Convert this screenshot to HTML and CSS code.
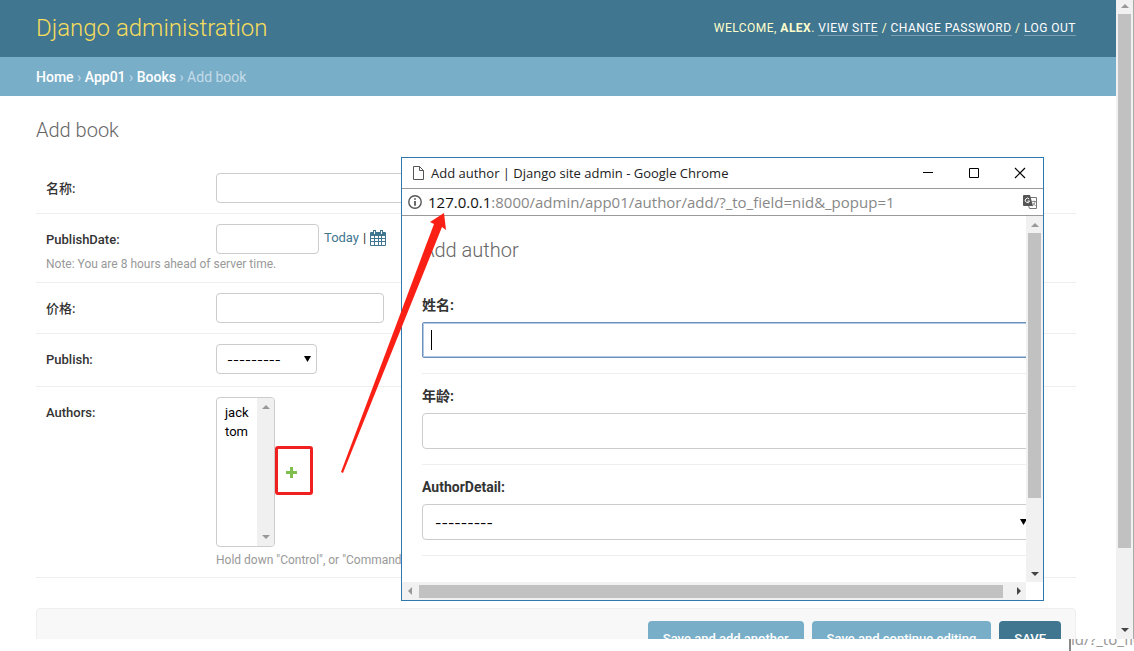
FILE: index.html
```html
<!DOCTYPE html>
<html lang="en">
<head>
<meta charset="utf-8">
<title>Add book | Django site admin</title>
<link rel="stylesheet" href="styles.css">
</head>
<body>
<div class="desktop">
  <div class="browser">
    <div class="page">
      <header class="header">
        <div class="branding">Django administration</div>
        <div class="user-tools">Welcome, <strong>Alex</strong>. <a href="#">View site</a> / <a href="#">Change password</a> / <a href="#">Log out</a></div>
      </header>
      <nav class="breadcrumbs"><a href="#">Home</a> › <a href="#">App01</a> › <a href="#">Books</a> › Add book</nav>
      <main class="content">
        <h1 class="page-title">Add book</h1>
        <form>
          <div class="form-row">
            <label class="row-label" for="name">名称:</label>
            <input class="field field-wide" id="name" type="text">
          </div>
          <div class="form-row form-row-noted">
            <div class="row-line">
              <label class="row-label" for="date">PublishDate:</label>
              <input class="field field-date" id="date" type="text">
              <span class="shortcuts"><a href="#">Today</a><span>|</span><a href="#" aria-label="Choose date"><svg class="calendar" viewBox="0 0 16 16" width="16" height="16"><path fill="#417690" fill-rule="evenodd" d="M1 2h2V0h3v2h4V0h3v2h2q1 0 1 1v12q0 1-1 1H1q-1 0-1-1V3q0-1 1-1zM1 6v2h3V6zM5 6v2h3V6zM9 6v2h2V6zM12 6v2h3V6zM1 9v2h3V9zM5 9v2h3V9zM9 9v2h2V9zM12 9v2h3V9zM1 12v3h3v-3zM5 12v3h3v-3zM9 12v3h2v-3zM12 12v3h3v-3zM4 1v3h1V1zM11 1v3h1V1z"/></svg></a></span>
            </div>
            <p class="note">Note: You are 8 hours ahead of server time.</p>
          </div>
          <div class="form-row">
            <label class="row-label" for="price">价格:</label>
            <input class="field field-price" id="price" type="text">
          </div>
          <div class="form-row form-row-select">
            <label class="row-label" for="publish">Publish:</label>
            <span class="select-wrap"><select class="field field-select" id="publish"><option>---------</option></select><svg class="caret" viewBox="0 0 7 6" width="7" height="6"><path d="M0 0h7L3.500 6z"/></svg></span>
          </div>
          <div class="form-row form-row-top">
            <label class="row-label" for="authors">Authors:</label>
            <div class="authors">
              <div class="authors-line">
                <div class="listbox">
                  <select class="list" id="authors" multiple><option>jack</option><option>tom</option></select>
                  <div class="list-scroll"><i class="tri tri-up"></i><i class="tri tri-down"></i></div>
                </div>
                <a class="add-link" href="#" aria-label="Add another author"><svg viewBox="0 0 11 11" width="11" height="11"><path fill="#7fbf4d" d="M4 0h3v4h4v3H7v4H4V7H0V4h4z"/></svg></a>
              </div>
              <p class="help">Hold down "Control", or "Command" on a Mac, to select more than one.</p>
            </div>
          </div>
          <div class="submit-row">
            <button class="btn" type="button">Save and add another</button>
            <button class="btn" type="button">Save and continue editing</button>
            <button class="btn btn-main" type="button">SAVE</button>
          </div>
        </form>
      </main>
    </div>
    <div class="scroll-y scroll-page"><i class="tri tri-up"></i><div class="thumb"></div><i class="tri tri-down tri-dark"></i></div>
  </div>
  <div class="under"><div class="under-text">id/?_to_field</div></div>

  <section class="popup" aria-label="Add author">
    <div class="titlebar">
      <svg class="doc" viewBox="0 0 11 14" width="11" height="14" fill="none" stroke="#555"><path d="M.5.5h6l4 4v9H.5zM6.500.5v4h4"/></svg>
      <span class="title-text">Add author | Django site admin - Google Chrome</span>
      <button class="win-btn" aria-label="Minimize"><svg viewBox="0 0 12 12" width="12" height="12"><path d="M1 5.500h10" stroke="#000"/></svg></button>
      <button class="win-btn" aria-label="Maximize"><svg viewBox="0 0 12 12" width="12" height="12"><path d="M1.500 1.500h9v9h-9z" stroke="#000" fill="none"/></svg></button>
      <button class="win-btn" aria-label="Close"><svg viewBox="0 0 12 12" width="12" height="12"><path d="M1 1l10 10M11 1L1 11" stroke="#000" stroke-width="1.200"/></svg></button>
    </div>
    <div class="urlbar">
      <svg viewBox="0 0 14 14" width="14" height="14"><circle cx="7" cy="7" r="6.200" fill="none" stroke="#555" stroke-width="1.400"/><path d="M6.200 3.200h1.600v1.600H6.200zM6.200 6h1.600v4.800H6.200z" fill="#444"/></svg>
      <span class="url"><b>127.0.0.1</b>:8000/admin/app01/author/add/?_to_field=nid&amp;_popup=1</span>
      <svg viewBox="0 0 14 14" width="14" height="14"><path d="M7 2.500h6.500v11H6.500l-1-3" fill="#fff" stroke="#777"/><path d="M1 0h6l3 11H1q-1 0-1-1V1q0-1 1-1z" fill="#555"/><path d="M6.200 4A2.200 2.200 0 1 0 6.600 6H4.500" fill="none" stroke="#fff"/><path d="M9 6.500h4M11 5.500v1M12.300 6.500q-.5 3-3 4.500M9.700 8l3 3" fill="none" stroke="#777" stroke-width=".8"/></svg>
    </div>
    <div class="popup-main">
      <div class="popup-view">
        <div class="popup-content">
          <h2 class="page-title">Add author</h2>
          <div class="popup-row"><label for="aname">姓名:</label><div class="popup-field popup-focus"><i class="cursor"></i><input id="aname" type="text"></div></div>
          <div class="popup-row"><label for="age">年龄:</label><div class="popup-field"><input id="age" type="text"></div></div>
          <div class="popup-row"><label for="detail">AuthorDetail:</label><div class="popup-field"><select id="detail"><option>---------</option></select><svg class="caret" viewBox="0 0 7 6" width="7" height="6"><path d="M0 0h7L3.500 6z"/></svg></div></div>
        </div>
      </div>
      <div class="scroll-y scroll-popup"><i class="tri tri-up"></i><div class="thumb"></div><i class="tri tri-down tri-dark"></i></div>
    </div>
    <div class="scroll-x"><i class="tri tri-left"></i><div class="thumb"></div><i class="tri tri-right"></i></div>
  </section>

  <div class="highlight"></div>
  <svg class="arrow" viewBox="0 0 106 262" width="106" height="262"><path fill="#fb2015" d="M0 259L93 11l-4-2L103 0l2 17-4-3L2 260z"/></svg>
</div>
</body>
</html>
```
FILE: styles.css
```css
* { box-sizing: border-box; }
body {
  margin: 0;
  background: #fff;
  color: #333;
  font: 13px/16px Roboto, "Noto Sans CJK SC", sans-serif;
}
h1, h2, p { margin: 0; }
a { color: #417690; text-decoration: none; }
input, select, button { font: inherit; color: inherit; border: 0; margin: 0; background: none; outline: 0; }
select { appearance: none; }

.desktop { position: relative; height: 100vh; display: flex; flex-direction: column; overflow: hidden; }
.browser { flex: 1; min-height: 0; display: flex; overflow: hidden; }
.page { flex: 1; min-width: 0; overflow: hidden; }

.header {
  display: flex; justify-content: space-between; align-items: center;
  height: 57px; padding: 0 40px 2px 36px;
  background: #417690; color: #ffc;
}
.branding { font-size: 24px; line-height: 28px; font-weight: 300; color: #f5dd5d; }
.user-tools { font-size: 12px; letter-spacing: 0.04em; text-transform: uppercase; }
.user-tools a { color: #fff; border-bottom: 1px solid #7a9fb1; }
.breadcrumbs {
  padding: 11px 36px 9px; line-height: 19px; font-size: 14px;
  background: #79aec8; color: #c4dce8;
}
.breadcrumbs a { color: #fff; font-weight: 500; }

.content { padding: 22px 40px 0 36px; }
.page-title { font-size: 20px; line-height: 24px; font-weight: 300; color: #666; }
form { padding-top: 21px; }
.form-row { display: flex; align-items: center; padding: 10px; border-bottom: 1px solid #eee; }
.form-row-noted { display: block; padding-bottom: 9px; }
.form-row-select { padding-bottom: 12px; }
.form-row-top { align-items: flex-start; }
.form-row .row-label { padding-top: 2px; }
.form-row-top .row-label { padding-top: 8px; }
.row-line { display: flex; align-items: center; }
.row-label { width: 170px; flex: none; font-weight: 500; }
.field { height: 30px; border: 1px solid #ccc; border-radius: 4px; background: #fff; padding: 4px 10px; }
.field-wide { width: 360px; }
.field-date { width: 103px; }
.field-price { width: 168px; }
.field-select { width: 101px; padding-top: 6px; font-family: Inter, sans-serif; color: #000; }
.shortcuts { display: flex; align-items: center; gap: 4px; padding: 0 0 2px 5px; }
.calendar { display: block; }
.note, .help { font-size: 12px; line-height: 18px; color: #999; }
.note { padding-top: 1px; }
.select-wrap { display: flex; position: relative; }
.caret { position: absolute; right: 6px; top: 50%; margin-top: -3px; pointer-events: none; }
.authors-line { display: flex; align-items: center; gap: 11px; }
.add-link { padding-top: 3px; }
.listbox { display: flex; width: 59px; height: 150px; border: 1px solid #ccc; border-radius: 4px; overflow: hidden; }
.list { flex: 1; min-width: 0; padding: 7px 0 0 8px; color: #000; overflow: hidden; scrollbar-width: none; }
.list option { padding: 0; line-height: 19px; min-height: 19px; }
.list-scroll { width: 17px; display: flex; flex-direction: column; align-items: center; justify-content: space-between; padding: 7px 0; background: #f0f0f0; }
.help { padding-top: 6px; line-height: 14px; }
.submit-row {
  display: flex; justify-content: flex-end; gap: 8px;
  margin-top: 30px; padding: 12px 14px;
  background: #f8f8f8; border: 1px solid #eee; border-radius: 4px;
}
.btn { height: 35px; padding: 0 15px; border-radius: 4px; background: #79aec8; color: #fff; font-weight: 500; }
.btn-main { background: #417690; }

.tri { flex: none; width: 0; height: 0; border: 4px solid transparent; }
.tri-up { border-top: 0; border-bottom-color: #999; }
.tri-down { border-bottom: 0; border-top-color: #999; }
.tri-left { border-left: 0; border-right-color: #999; }
.tri-right { border-right: 0; border-left-color: #444; }
.tri-dark { border-top-color: #444; }
.scroll-y { flex: none; display: flex; flex-direction: column; align-items: center; background: #f1f1f1; }
.scroll-y .tri-down { margin-top: auto; }
.scroll-y .thumb { width: 13px; background: #c1c1c1; }
.scroll-page { width: 18px; padding: 4px 0 7px; border-right: 1px solid #aaa; }
.scroll-page .thumb { height: 85%; margin-top: 6px; }
.scroll-popup { width: 17px; padding: 7px 0 6px; }
.scroll-popup .thumb { height: 75%; margin-top: 6px; }

.under { flex: none; height: 12px; display: flex; justify-content: flex-end; background: #fff; overflow: hidden; }
.under-text {
  width: 65px; height: 12px; border-left: 2px solid #888; overflow: hidden;
  display: flex; align-items: flex-end; white-space: nowrap;
  font: 15px/24px "Noto Sans", sans-serif; color: #999;
}

.popup {
  position: absolute; left: 401px; top: 157px; width: 643px; height: 444px;
  display: flex; flex-direction: column;
  background: #fff; border: 1px solid #2e78ad;
}
.titlebar { display: flex; align-items: center; height: 31px; padding-left: 11px; border-bottom: 1px solid #999; font: 13px/20px "Open Sans", sans-serif; color: #222; }
.title-text { flex: 1; padding-left: 7px; }
.win-btn { display: flex; align-items: center; justify-content: center; width: 46px; height: 28px; padding: 0; }
.urlbar { display: flex; align-items: center; gap: 6px; height: 27px; padding: 0 6px; border-bottom: 1px solid #999; font: 15px/20px "Open Sans", sans-serif; color: #888; }
.url { flex: 1; }
.url b { font-weight: 400; color: #111; }
.popup-main { flex: 1; min-height: 0; display: flex; }
.popup-view { flex: 1; min-width: 0; overflow: hidden; }
.popup-content { width: 632px; padding: 22px 0 0 20px; }
.popup-content .page-title { padding-bottom: 21px; box-sizing: content-box; }
.popup-row { padding: 14px 0 15px; border-bottom: 1px solid #eee; }
.popup-row label { display: block; height: 25px; line-height: 16px; font-size: 14px; font-weight: 700; }
.popup-field { position: relative; display: flex; align-items: center; height: 36px; border: 1px solid #ccc; border-radius: 4px; }
.popup-field input, .popup-field select { width: 100%; height: 34px; padding: 0 12px; font-size: 14px; }
.popup-field select { padding-top: 2px; font-family: Inter, sans-serif; color: #000; }
.popup-focus { border-color: #6a90bd; border-radius: 2px; box-shadow: inset 0 0 0 1px #b4c8e0; }
.cursor { position: absolute; left: 8px; width: 1px; height: 20px; background: #000; }
.scroll-x { display: flex; align-items: center; height: 18px; margin-right: 17px; padding: 0 5px 0 6px; background: #f1f1f1; }
.scroll-x .thumb { flex: 1; height: 13px; margin: 0 14px 0 7px; background: #c1c1c1; }

.highlight { position: absolute; left: 275px; top: 446px; width: 38px; height: 49px; border: 3px solid #f02020; border-radius: 3px; pointer-events: none; }
.arrow { position: absolute; left: 341px; top: 213px; pointer-events: none; }
```
